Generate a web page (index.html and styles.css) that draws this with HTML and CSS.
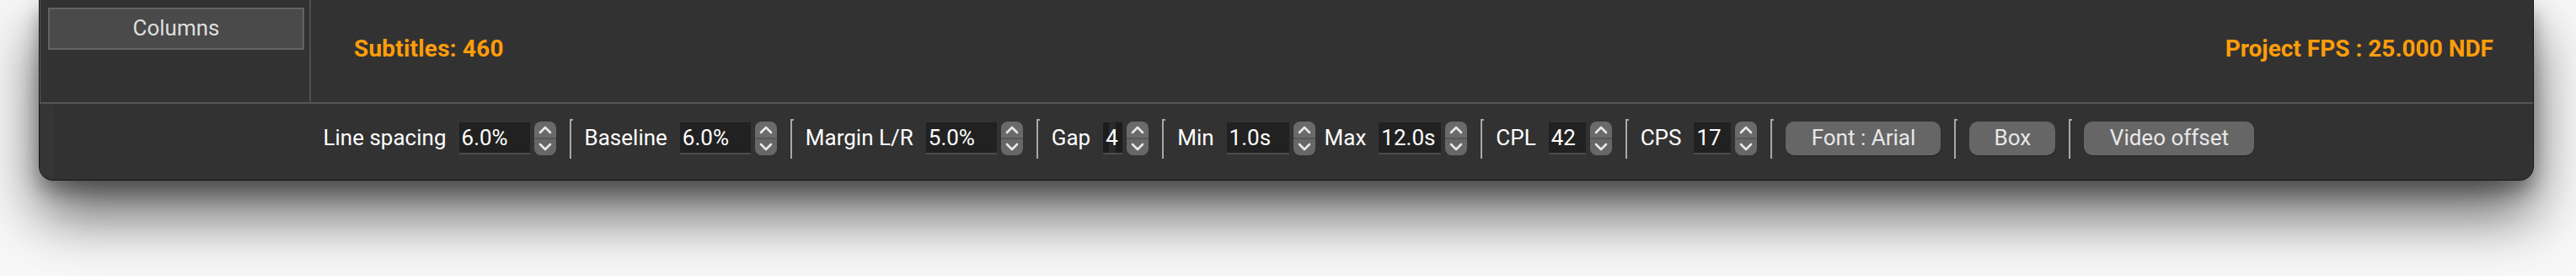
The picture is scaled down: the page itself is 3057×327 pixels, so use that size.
FILE: index.html
```html
<!DOCTYPE html>
<html>
<head>
<meta charset="utf-8">
<link rel="stylesheet" href="styles.css">
</head>
<body>
<div class="window">
  <div class="top">
    <div class="sidebar">
      <div class="side-btn">Columns</div>
    </div>
    <div class="status">
      <span class="stat">Subtitles: 460</span>
      <span class="stat">Project FPS : 25.000 NDF</span>
    </div>
  </div>
  <div class="toolbar">
    <div class="group">
      <span class="label">Line spacing</span>
      <span class="field w84">6.0%</span>
      <span class="stepper"><svg viewBox="0 0 26 40" width="26" height="40"><path d="M7 13 L13 7 L19 13 M7 27 L13 33 L19 27" /></svg></span>
    </div>
    <span class="sep"></span>
    <div class="group">
      <span class="label">Baseline</span>
      <span class="field w84">6.0%</span>
      <span class="stepper"><svg viewBox="0 0 26 40" width="26" height="40"><path d="M7 13 L13 7 L19 13 M7 27 L13 33 L19 27" /></svg></span>
    </div>
    <span class="sep"></span>
    <div class="group">
      <span class="label">Margin L/R</span>
      <span class="field w84">5.0%</span>
      <span class="stepper"><svg viewBox="0 0 26 40" width="26" height="40"><path d="M7 13 L13 7 L19 13 M7 27 L13 33 L19 27" /></svg></span>
    </div>
    <span class="sep"></span>
    <div class="group">
      <span class="label">Gap</span>
      <span class="field w23 gapfield">4</span>
      <span class="stepper"><svg viewBox="0 0 26 40" width="26" height="40"><path d="M7 13 L13 7 L19 13 M7 27 L13 33 L19 27" /></svg></span>
    </div>
    <span class="sep"></span>
    <div class="group">
      <span class="label">Min</span>
      <span class="field w74">1.0s</span>
      <span class="stepper"><svg viewBox="0 0 26 40" width="26" height="40"><path d="M7 13 L13 7 L19 13 M7 27 L13 33 L19 27" /></svg></span>
      <span class="label next">Max</span>
      <span class="field w74">12.0s</span>
      <span class="stepper"><svg viewBox="0 0 26 40" width="26" height="40"><path d="M7 13 L13 7 L19 13 M7 27 L13 33 L19 27" /></svg></span>
    </div>
    <span class="sep"></span>
    <div class="group">
      <span class="label">CPL</span>
      <span class="field w44">42</span>
      <span class="stepper"><svg viewBox="0 0 26 40" width="26" height="40"><path d="M7 13 L13 7 L19 13 M7 27 L13 33 L19 27" /></svg></span>
    </div>
    <span class="sep"></span>
    <div class="group">
      <span class="label">CPS</span>
      <span class="field w44">17</span>
      <span class="stepper"><svg viewBox="0 0 26 40" width="26" height="40"><path d="M7 13 L13 7 L19 13 M7 27 L13 33 L19 27" /></svg></span>
    </div>
    <span class="sep"></span>
    <span class="btn w184">Font : Arial</span>
    <span class="sep"></span>
    <span class="btn w102">Box</span>
    <span class="sep"></span>
    <span class="btn w202">Video offset</span>
  </div>
</div>
</body>
</html>
```
FILE: styles.css
```css
html, body {
  margin: 0;
  padding: 0;
}
body {
  width: 3057px;
  height: 327px;
  overflow: hidden;
  background: #f8f8f8;
  font-family: Roboto, "Noto Sans", sans-serif;
}
.window {
  margin-left: 46px;
  width: 2961px;
  height: 214px;
  box-sizing: border-box;
  background: #323232;
  border-radius: 0 0 17px 17px;
  border: 1px solid #141414;
  border-top: none;
  box-shadow: inset 1px -2px 0 #5a5a5a, 0 40px 70px rgba(0, 0, 0, 0.62), 0 12px 22px rgba(0, 0, 0, 0.3);
  display: flex;
  flex-direction: column;
}
.top {
  display: flex;
  height: 123px;
  border-bottom: 2px solid #555;
  box-sizing: border-box;
}
.sidebar {
  width: 322px;
  border-right: 2px solid #505050;
  box-sizing: border-box;
  padding: 9px 0 0 10px;
}
.side-btn {
  width: 304px;
  height: 50px;
  box-sizing: border-box;
  background: #4a4a4a;
  border: 2px solid #636363;
  color: #dedede;
  font-size: 26px;
  display: flex;
  align-items: center;
  justify-content: center;
  padding-bottom: 2px;
}
.status {
  flex: 1;
  display: flex;
  justify-content: space-between;
  align-items: flex-start;
  padding: 41px 47px 0 51px;
}
.stat {
  font-family: Roboto, sans-serif;
  font-weight: 700;
  font-size: 28px;
  color: #ff9d0a;
}
.stat:first-child {
  letter-spacing: 0.2px;
}
.toolbar {
  flex: 1;
  display: flex;
  align-items: center;
  justify-content: center;
  gap: 16px;
  padding-bottom: 8px;
  padding-left: 6px;
  background: linear-gradient(90deg, #353535 0 18px, #323232 18px);
  border-radius: 0 0 16px 16px;
}
.group {
  display: flex;
  align-items: center;
}
.label {
  color: #fff;
  font-size: 26px;
  margin-right: 15px;
  padding-bottom: 2px;
}
.label.next {
  margin-left: 11px;
}
.field {
  height: 38px;
  box-sizing: border-box;
  background: #212121;
  border-bottom: 2px solid #4c4c4c;
  color: #fff;
  font-size: 26px;
  padding-left: 3px;
  display: flex;
  align-items: center;
  margin-right: 5px;
}
.gapfield {
  background: linear-gradient(90deg, #1c1c1c 0 7px, #2a2a2a 7px 15px, #1c1c1c 15px);
}
.w84 { width: 84px; }
.w74 { width: 74px; }
.w44 { width: 44px; }
.w23 { width: 23px; }
.stepper {
  width: 26px;
  height: 40px;
  border-radius: 8px;
  background: linear-gradient(#6a6a6a 0 19px, #575757 19px 21px, #676767 21px);
  display: block;
}
.stepper svg {
  display: block;
}
.stepper path {
  fill: none;
  stroke: #e8e8e8;
  stroke-width: 2.6;
  stroke-linecap: round;
  stroke-linejoin: round;
}
.sep {
  width: 2px;
  height: 47px;
  background: #a8a8a8;
  position: relative;
}
.sep::after {
  content: "";
  position: absolute;
  left: 2px;
  top: 0;
  width: 2px;
  height: 2px;
  background: #a8a8a8;
}
.btn {
  height: 40px;
  box-sizing: border-box;
  border-radius: 10px;
  background: #666;
  color: #e8e8e8;
  font-size: 26px;
  display: flex;
  align-items: center;
  justify-content: center;
  padding-bottom: 2px;
  box-shadow: 0 1px 1px rgba(0,0,0,0.3);
}
.w184 { width: 184px; }
.w102 { width: 102px; }
.w202 { width: 202px; }
```
